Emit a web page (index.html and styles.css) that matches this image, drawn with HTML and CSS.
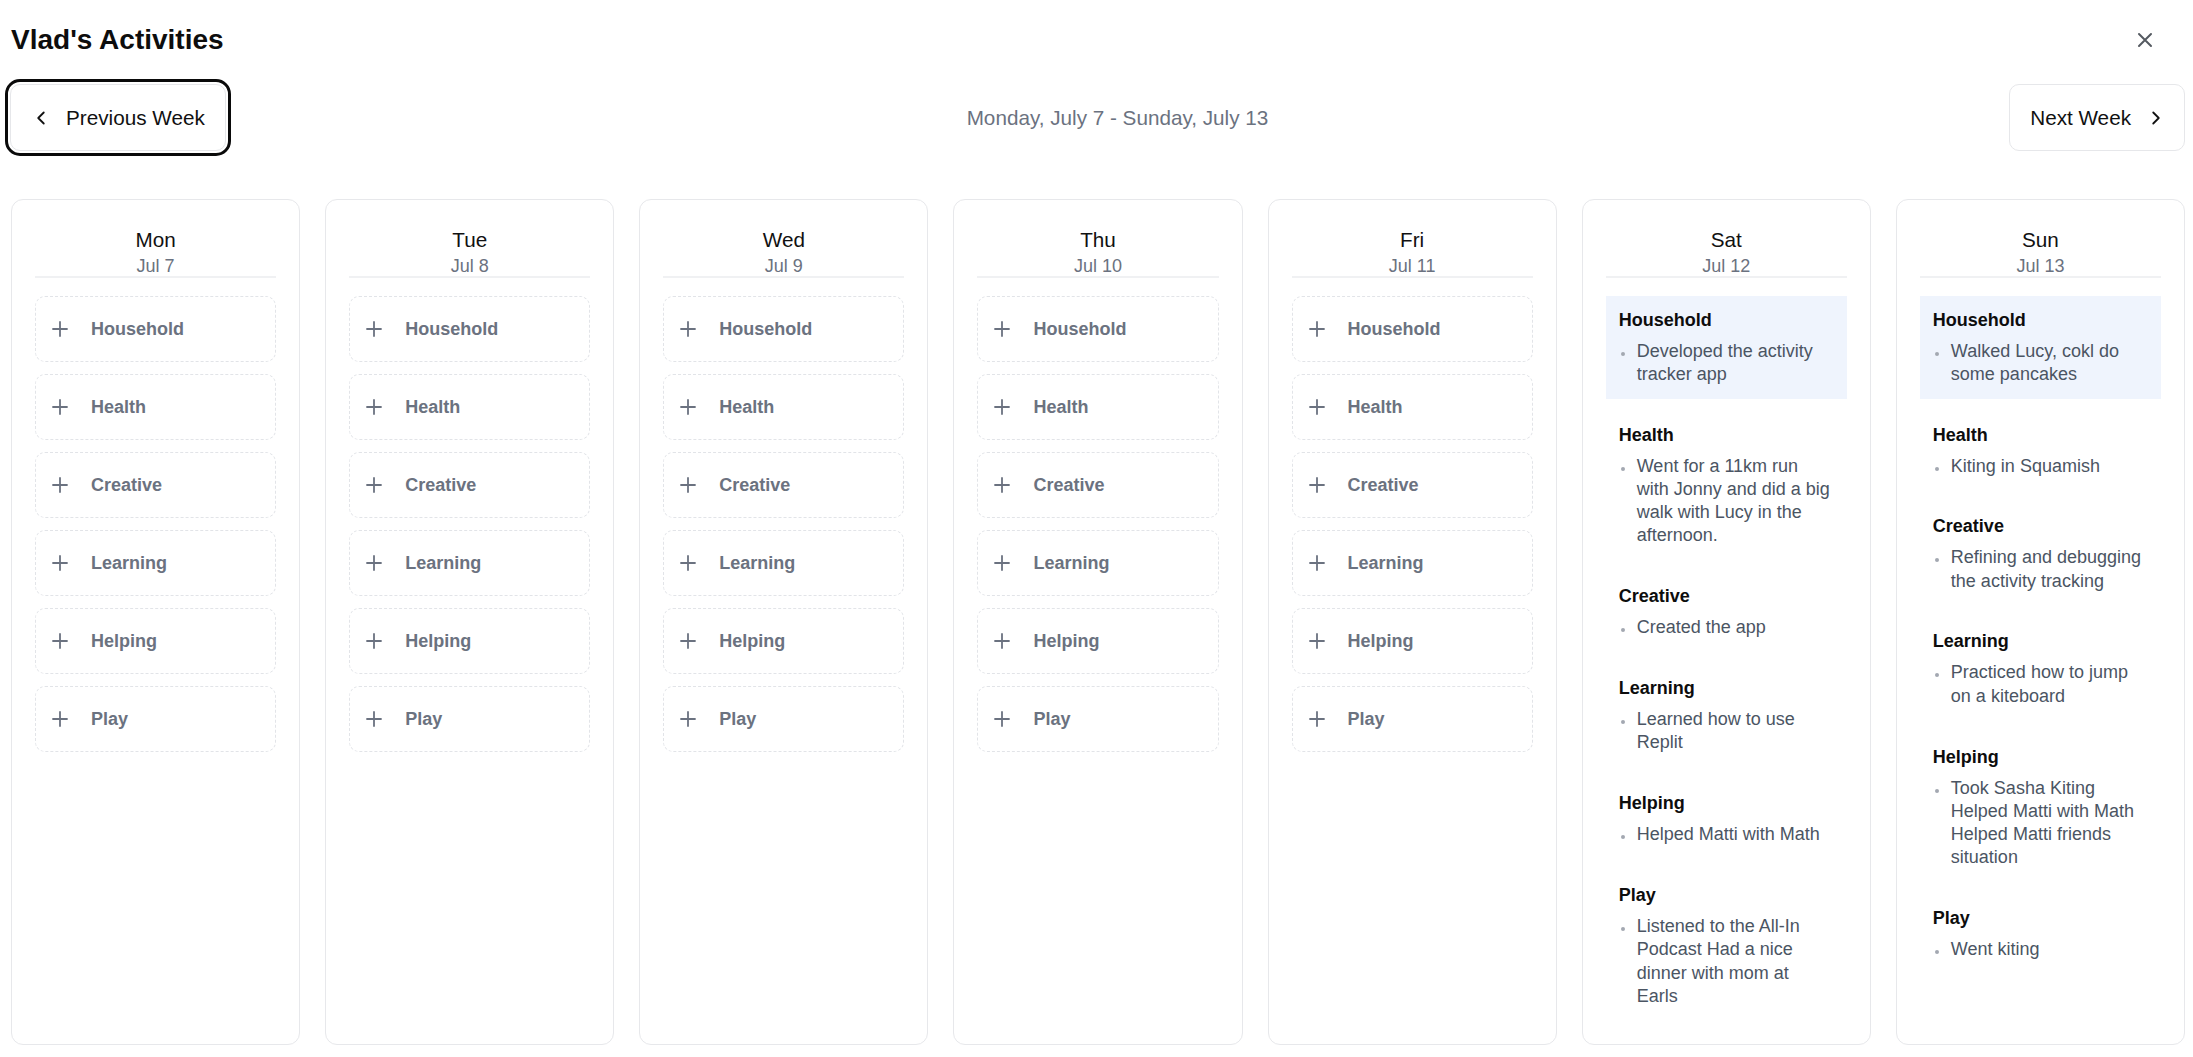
FILE: index.html
```html
<!DOCTYPE html>
<html lang="en">
<head>
<meta charset="utf-8">
<title>Vlad's Activities</title>
<link rel="stylesheet" href="styles.css">
</head>
<body>
<svg class="defs" width="0" height="0" aria-hidden="true">
  <symbol id="plus" viewBox="0 0 16 16"><path d="M8 1v14M1 8h14" fill="none" stroke="currentColor" stroke-width="1.8" stroke-linecap="round"/></symbol>
</svg>
<div class="page">
  <header class="top">
    <h1 class="title">Vlad's Activities</h1>
    <button class="close" aria-label="Close">
      <svg viewBox="0 0 24 24" width="24" height="24"><path d="M18 6 6 18M6 6l12 12" fill="none" stroke="currentColor" stroke-width="2" stroke-linecap="round"/></svg>
    </button>
  </header>

  <nav class="weeknav">
    <button class="navbtn prev focused">
      <svg viewBox="0 0 24 24" width="22" height="22"><path d="m15 18-6-6 6-6" fill="none" stroke="currentColor" stroke-width="2" stroke-linecap="round" stroke-linejoin="round"/></svg>
      <span>Previous Week</span>
    </button>
    <div class="range">Monday, July 7 - Sunday, July 13</div>
    <button class="navbtn next">
      <span>Next Week</span>
      <svg viewBox="0 0 24 24" width="22" height="22"><path d="m9 18 6-6-6-6" fill="none" stroke="currentColor" stroke-width="2" stroke-linecap="round" stroke-linejoin="round"/></svg>
    </button>
  </nav>

  <main class="week">
    <section class="day">
      <div class="dayhead"><div class="dayname">Mon</div><div class="daydate">Jul 7</div></div>
      <div class="daylist">
        <div class="add"><svg><use href="#plus"/></svg>Household</div>
        <div class="add"><svg><use href="#plus"/></svg>Health</div>
        <div class="add"><svg><use href="#plus"/></svg>Creative</div>
        <div class="add"><svg><use href="#plus"/></svg>Learning</div>
        <div class="add"><svg><use href="#plus"/></svg>Helping</div>
        <div class="add"><svg><use href="#plus"/></svg>Play</div>
      </div>
    </section>
    <section class="day">
      <div class="dayhead"><div class="dayname">Tue</div><div class="daydate">Jul 8</div></div>
      <div class="daylist">
        <div class="add"><svg><use href="#plus"/></svg>Household</div>
        <div class="add"><svg><use href="#plus"/></svg>Health</div>
        <div class="add"><svg><use href="#plus"/></svg>Creative</div>
        <div class="add"><svg><use href="#plus"/></svg>Learning</div>
        <div class="add"><svg><use href="#plus"/></svg>Helping</div>
        <div class="add"><svg><use href="#plus"/></svg>Play</div>
      </div>
    </section>
    <section class="day">
      <div class="dayhead"><div class="dayname">Wed</div><div class="daydate">Jul 9</div></div>
      <div class="daylist">
        <div class="add"><svg><use href="#plus"/></svg>Household</div>
        <div class="add"><svg><use href="#plus"/></svg>Health</div>
        <div class="add"><svg><use href="#plus"/></svg>Creative</div>
        <div class="add"><svg><use href="#plus"/></svg>Learning</div>
        <div class="add"><svg><use href="#plus"/></svg>Helping</div>
        <div class="add"><svg><use href="#plus"/></svg>Play</div>
      </div>
    </section>
    <section class="day">
      <div class="dayhead"><div class="dayname">Thu</div><div class="daydate">Jul 10</div></div>
      <div class="daylist">
        <div class="add"><svg><use href="#plus"/></svg>Household</div>
        <div class="add"><svg><use href="#plus"/></svg>Health</div>
        <div class="add"><svg><use href="#plus"/></svg>Creative</div>
        <div class="add"><svg><use href="#plus"/></svg>Learning</div>
        <div class="add"><svg><use href="#plus"/></svg>Helping</div>
        <div class="add"><svg><use href="#plus"/></svg>Play</div>
      </div>
    </section>
    <section class="day">
      <div class="dayhead"><div class="dayname">Fri</div><div class="daydate">Jul 11</div></div>
      <div class="daylist">
        <div class="add"><svg><use href="#plus"/></svg>Household</div>
        <div class="add"><svg><use href="#plus"/></svg>Health</div>
        <div class="add"><svg><use href="#plus"/></svg>Creative</div>
        <div class="add"><svg><use href="#plus"/></svg>Learning</div>
        <div class="add"><svg><use href="#plus"/></svg>Helping</div>
        <div class="add"><svg><use href="#plus"/></svg>Play</div>
      </div>
    </section>
    <section class="day">
      <div class="dayhead"><div class="dayname">Sat</div><div class="daydate">Jul 12</div></div>
      <div class="daylist">
        <div class="entry hl"><h3>Household</h3><ul><li>Developed the activity tracker app</li></ul></div>
        <div class="entry"><h3>Health</h3><ul><li>Went for a 11km run with Jonny and did a big walk with Lucy in the afternoon.</li></ul></div>
        <div class="entry"><h3>Creative</h3><ul><li>Created the app</li></ul></div>
        <div class="entry"><h3>Learning</h3><ul><li>Learned how to use Replit</li></ul></div>
        <div class="entry"><h3>Helping</h3><ul><li>Helped Matti with Math</li></ul></div>
        <div class="entry"><h3>Play</h3><ul><li>Listened to the All-In Podcast Had a nice dinner with mom at Earls</li></ul></div>
      </div>
    </section>
    <section class="day">
      <div class="dayhead"><div class="dayname">Sun</div><div class="daydate">Jul 13</div></div>
      <div class="daylist">
        <div class="entry hl"><h3>Household</h3><ul><li>Walked Lucy, cokl do some pancakes</li></ul></div>
        <div class="entry"><h3>Health</h3><ul><li>Kiting in Squamish</li></ul></div>
        <div class="entry"><h3>Creative</h3><ul><li>Refining and debugging the activity tracking</li></ul></div>
        <div class="entry"><h3>Learning</h3><ul><li>Practiced how to jump on a kiteboard</li></ul></div>
        <div class="entry"><h3>Helping</h3><ul><li>Took Sasha Kiting Helped Matti with Math Helped Matti friends situation</li></ul></div>
        <div class="entry"><h3>Play</h3><ul><li>Went kiting</li></ul></div>
      </div>
    </section>
  </main>
</div>
</body>
</html>
```
FILE: styles.css
```css
html, body {
  margin: 0;
  background: #ffffff;
}

body {
  font-family: "Liberation Sans", Arial, sans-serif;
  color: #111111;
}

.defs {
  display: block;
  width: 0;
  height: 0;
  overflow: hidden;
}

.page {
  padding: 22px 8px 11px 11px;
}

/* header */
.top {
  display: flex;
  align-items: center;
  justify-content: space-between;
  height: 36px;
}

.title {
  margin: 0;
  font-size: 28px;
  line-height: 36px;
  font-weight: 700;
  color: #0d0d0d;
}

.close {
  display: flex;
  width: 24px;
  height: 24px;
  padding: 0;
  margin-right: 28px;
  border: 0;
  background: none;
  color: #555a61;
}

/* week navigation */
.weeknav {
  display: flex;
  align-items: center;
  justify-content: space-between;
  margin: 26px 0 0 -1px;
}

.navbtn {
  display: flex;
  align-items: center;
  gap: 14px;
  height: 67px;
  box-sizing: border-box;
  border: 1px solid #e6e7ea;
  border-radius: 10px;
  background: #ffffff;
  font-family: inherit;
  font-size: 20.7px;
  color: #111111;
}

.navbtn svg {
  flex: none;
}

.navbtn.prev {
  padding: 0 20px 0 19px;
}

.navbtn.next {
  padding: 0 17px 0 20px;
}

.focused {
  outline: 3px solid #0a0a0a;
  outline-offset: 2px;
}

.range {
  font-size: 20.7px;
  color: #6b7280;
}

/* week grid */
.week {
  display: grid;
  grid-template-columns: repeat(7, minmax(0, 1fr));
  gap: 25px;
  margin-top: 48px;
}

.day {
  display: flex;
  flex-direction: column;
  min-width: 0;
  padding: 23px;
  border: 1px solid #e7e8eb;
  border-radius: 12px;
}

.dayhead {
  text-align: center;
  border-bottom: 2px solid #f0f1f3;
}

.dayname {
  font-size: 20.7px;
  line-height: 33px;
  color: #111111;
}

.daydate {
  font-size: 18px;
  line-height: 20px;
  color: #6b7280;
}

.daylist {
  display: flex;
  flex-direction: column;
  gap: 12px;
  margin-top: 18px;
}

/* empty category */
.add {
  display: flex;
  align-items: center;
  height: 66px;
  box-sizing: border-box;
  padding: 0 16px;
  border: 1px dashed #e2e4e8;
  border-radius: 10px;
  font-size: 18px;
  font-weight: 700;
  color: #6b7280;
}

.add svg {
  flex: none;
  width: 16px;
  height: 16px;
  margin-right: 23px;
  color: #6b7280;
}

/* filled category */
.entry {
  padding: 12.5px 14.5px 13px 13px;
}

.entry.hl {
  background: #eff4fd;
}

.entry h3 {
  margin: 0 0 8px;
  font-size: 18px;
  line-height: 23px;
  font-weight: 700;
  color: #0d0d0d;
}

.entry ul {
  margin: 0;
  padding: 0 0 0 18px;
  list-style: none;
}

.entry li {
  font-size: 18px;
  line-height: 23.3px;
  color: #4b5563;
}

.entry li::before {
  content: "";
  display: inline-block;
  width: 4px;
  height: 4px;
  margin: 0 12px 0 -16px;
  border-radius: 50%;
  background: #a3a8b1;
  vertical-align: 1px;
}
```
